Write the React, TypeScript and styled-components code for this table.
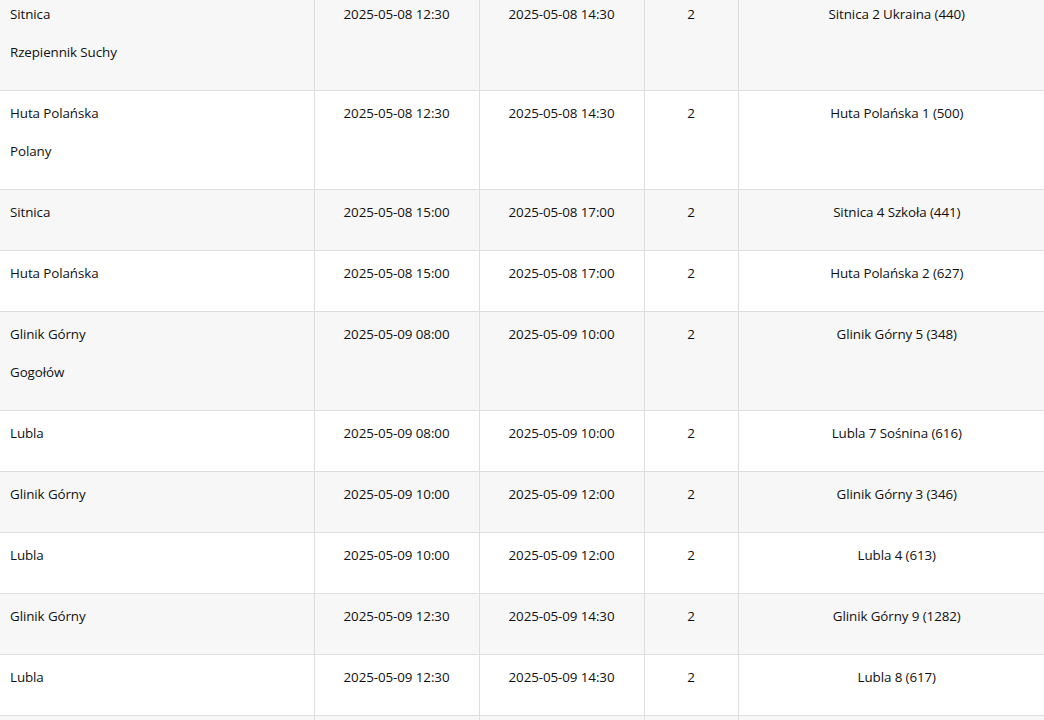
import React from "react";
import styled, { createGlobalStyle } from "styled-components";

const GlobalStyle = createGlobalStyle`
  html, body {
    margin: 0;
    padding: 0;
    background: #ffffff;
    overflow: hidden;
  }
  body {
    font-family: "Open Sans", "Noto Sans", "Liberation Sans", sans-serif;
    color: #111111;
  }
`;

const Table = styled.table`
  border-collapse: collapse;
  table-layout: fixed;
  width: 1055px;
  margin-top: -8px;
  font-size: 13.4px;
`;

const Row = styled.tr<{ $shaded: boolean }>`
  background: ${(p) => (p.$shaded ? "#f7f7f7" : "#ffffff")};
  border-bottom: 1px solid #dedede;
`;

const Cell = styled.td<{ $align?: "left" | "center" }>`
  padding: 10px 10px 12px;
  vertical-align: top;
  text-align: ${(p) => p.$align ?? "center"};
  border-right: 1px solid #dedede;
  &:last-child {
    border-right: none;
  }
`;

const Line = styled.p`
  margin: 0 0 14px;
  line-height: 24px;
  letter-spacing: -0.1px;
`;

type Entry = {
  places: string[];
  start: string;
  end: string;
  count: string;
  station: string;
};

const data: Entry[] = [
  { places: ["Sitnica", "Rzepiennik Suchy"], start: "2025-05-08 12:30", end: "2025-05-08 14:30", count: "2", station: "Sitnica 2 Ukraina (440)" },
  { places: ["Huta Polańska", "Polany"], start: "2025-05-08 12:30", end: "2025-05-08 14:30", count: "2", station: "Huta Polańska 1 (500)" },
  { places: ["Sitnica"], start: "2025-05-08 15:00", end: "2025-05-08 17:00", count: "2", station: "Sitnica 4 Szkoła (441)" },
  { places: ["Huta Polańska"], start: "2025-05-08 15:00", end: "2025-05-08 17:00", count: "2", station: "Huta Polańska 2 (627)" },
  { places: ["Glinik Górny", "Gogołów"], start: "2025-05-09 08:00", end: "2025-05-09 10:00", count: "2", station: "Glinik Górny 5 (348)" },
  { places: ["Lubla"], start: "2025-05-09 08:00", end: "2025-05-09 10:00", count: "2", station: "Lubla 7 Sośnina (616)" },
  { places: ["Glinik Górny"], start: "2025-05-09 10:00", end: "2025-05-09 12:00", count: "2", station: "Glinik Górny 3 (346)" },
  { places: ["Lubla"], start: "2025-05-09 10:00", end: "2025-05-09 12:00", count: "2", station: "Lubla 4 (613)" },
  { places: ["Glinik Górny"], start: "2025-05-09 12:30", end: "2025-05-09 14:30", count: "2", station: "Glinik Górny 9 (1282)" },
  { places: ["Lubla"], start: "2025-05-09 12:30", end: "2025-05-09 14:30", count: "2", station: "Lubla 8 (617)" },
  { places: ["Glinik Górny"], start: "2025-05-09 15:00", end: "2025-05-09 17:00", count: "2", station: "Glinik Górny 1 (344)" },
];

export default function App() {
  return (
    <>
      <GlobalStyle />
      <Table>
        <colgroup>
          <col style={{ width: 314 }} />
          <col style={{ width: 165 }} />
          <col style={{ width: 165 }} />
          <col style={{ width: 94 }} />
          <col style={{ width: 317 }} />
        </colgroup>
        <tbody>
          {data.map((d, i) => (
            <Row key={i} $shaded={i % 2 === 0}>
              <Cell $align="left">
                {d.places.map((p) => (
                  <Line key={p}>{p}</Line>
                ))}
              </Cell>
              <Cell>
                <Line>{d.start}</Line>
              </Cell>
              <Cell>
                <Line>{d.end}</Line>
              </Cell>
              <Cell>
                <Line>{d.count}</Line>
              </Cell>
              <Cell>
                <Line>{d.station}</Line>
              </Cell>
            </Row>
          ))}
        </tbody>
      </Table>
    </>
  );
}
